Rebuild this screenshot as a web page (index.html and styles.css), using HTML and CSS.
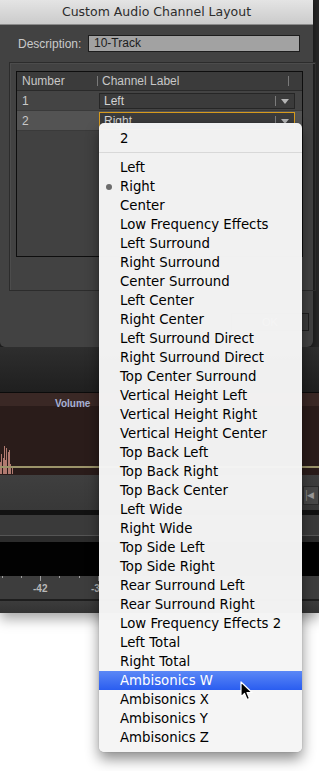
FILE: index.html
```html
<!DOCTYPE html>
<html lang="en">
  <head>
    <meta charset="UTF-8" />
    <meta name="viewport" content="width=device-width, initial-scale=1.0" />
    <title>Custom Audio Channel Layout</title>
    <link rel="stylesheet" href="styles.css">
  </head>

  <body>
    <div class="screen">
      <div class="workspace">
        <div class="dialog">
          <div class="titlebar">Custom Audio Channel Layout</div>

          <div class="desc-row">
            <label for="desc">Description:</label>
            <div class="desc-input" id="desc">10-Track</div>
          </div>

          <div class="group">
            <div class="table">
              <div class="thead">
                <div class="col-num">Number</div>
                <div class="col-label">Channel Label</div>
              </div>
              <div class="row">
                <div class="col-num">1</div>
                <div class="select">
                  <span>Left</span>
                  <span class="arrow"></span>
                </div>
              </div>
              <div class="row row-active">
                <div class="col-num">2</div>
                <div class="select select-focus">
                  <span>Right</span>
                  <span class="arrow"></span>
                </div>
              </div>
            </div>
          </div>

          <div class="btn-row">
            <div class="btn">OK</div>
          </div>
        </div>

        <div class="gap-band"></div>

        <div class="volume-panel">
          <div class="volume-head"><span class="volume-label">Volume</span></div>
          <div class="wave">
            <div class="bars">
              <span style="height: 12px"></span>
              <span style="height: 20px"></span>
              <span style="height: 16px"></span>
              <span style="height: 28px"></span>
              <span style="height: 14px"></span>
              <span style="height: 26px"></span>
              <span style="height: 22px"></span>
              <span style="height: 24px"></span>
              <span style="height: 10px"></span>
              <span style="height: 6px"></span>
            </div>
            <div class="level-line"></div>
          </div>
        </div>

        <div class="transport">
          <div class="transport-btn">&#9474;&#9664;</div>
        </div>
        <div class="black-line"></div>
        <div class="band"></div>
        <div class="band-dark"></div>
        <div class="meter"></div>
        <div class="ruler">
          <span class="tick" style="left: 2px"></span>
          <span class="tick" style="left: 21px"></span>
          <span class="tick tall" style="left: 40px"></span>
          <span class="tick" style="left: 59px"></span>
          <span class="tick" style="left: 79px"></span>
          <span class="tick tall" style="left: 98px"></span>
          <span class="ruler-num" style="left: 33px">-42</span>
          <span class="ruler-num" style="left: 91px">-3</span>
        </div>
        <div class="footer-band"></div>
      </div>

      <div class="menu">
        <div class="menu-item">2</div>
        <div class="menu-sep"></div>
        <div class="menu-item">Left</div>
        <div class="menu-item checked">Right</div>
        <div class="menu-item">Center</div>
        <div class="menu-item">Low Frequency Effects</div>
        <div class="menu-item">Left Surround</div>
        <div class="menu-item">Right Surround</div>
        <div class="menu-item">Center Surround</div>
        <div class="menu-item">Left Center</div>
        <div class="menu-item">Right Center</div>
        <div class="menu-item">Left Surround Direct</div>
        <div class="menu-item">Right Surround Direct</div>
        <div class="menu-item">Top Center Surround</div>
        <div class="menu-item">Vertical Height Left</div>
        <div class="menu-item">Vertical Height Right</div>
        <div class="menu-item">Vertical Height Center</div>
        <div class="menu-item">Top Back Left</div>
        <div class="menu-item">Top Back Right</div>
        <div class="menu-item">Top Back Center</div>
        <div class="menu-item">Left Wide</div>
        <div class="menu-item">Right Wide</div>
        <div class="menu-item">Top Side Left</div>
        <div class="menu-item">Top Side Right</div>
        <div class="menu-item">Rear Surround Left</div>
        <div class="menu-item">Rear Surround Right</div>
        <div class="menu-item">Low Frequency Effects 2</div>
        <div class="menu-item">Left Total</div>
        <div class="menu-item">Right Total</div>
        <div class="menu-item highlighted">Ambisonics W</div>
        <div class="menu-item">Ambisonics X</div>
        <div class="menu-item">Ambisonics Y</div>
        <div class="menu-item">Ambisonics Z</div>
      </div>

      <svg class="cursor" width="13" height="20" viewBox="0 0 13 20">
        <path d="M1 1 L1 16 L4.5 12.5 L7 18.5 L9.5 17.5 L7 11.5 L12 11.5 Z" fill="#000" stroke="#fff" stroke-width="1.2" stroke-linejoin="round" />
      </svg>
    </div>
  </body>
</html>
```

FILE: styles.css
```css
body {
  margin: 0;
  background-color: #ffffff;
  font-family: "Liberation Sans", Arial, sans-serif;
}

.screen {
  position: relative;
  width: 319px;
  height: 771px;
  overflow: hidden;
  background-color: #ffffff;
}

.workspace {
  background-color: #262626;
  box-shadow: 0 6px 12px rgba(0, 0, 0, 0.35);
}

/* dialog */

.dialog {
  width: 313px;
  height: 347px;
  background-color: #424242;
  border-bottom-right-radius: 6px;
  border-bottom-left-radius: 5px;
  box-shadow: 0 2px 6px rgba(0, 0, 0, 0.5);
  display: flex;
  flex-direction: column;
}

.titlebar {
  height: 24px;
  line-height: 24px;
  text-align: center;
  font-family: "DejaVu Sans", sans-serif;
  font-size: 12.5px;
  color: #2c2c2c;
  background: linear-gradient(#e4e4e4, #cbcbcb);
  border-bottom: 1px solid #8a8a8a;
}

.desc-row {
  display: flex;
  align-items: center;
  margin-top: 10px;
  padding-left: 18px;
}

.desc-row label {
  font-size: 12px;
  color: #cacaca;
  width: 70px;
}

.desc-input {
  width: 205px;
  height: 15px;
  line-height: 15px;
  padding-left: 5px;
  font-size: 12px;
  color: #1c1c1c;
  background-color: #a2a2a2;
  border: 1px solid #1d1d1d;
}

.group {
  margin: 10px 0 0 9px;
  width: 299px;
  height: 219px;
  border: 1px solid #2c2c2c;
  box-shadow: inset 1px 1px 0 #4c4c4c;
  padding: 8px 0 0 6px;
}

.table {
  width: 285px;
  height: 184px;
  border: 1px solid #0e0e0e;
  background-color: #414141;
}

.thead {
  display: flex;
  height: 18px;
  line-height: 18px;
  font-size: 12px;
  color: #c8c8c8;
  background-color: #3b3b3b;
  border-bottom: 1px solid #2a2a2a;
}

.col-num {
  width: 75px;
  padding-left: 5px;
  font-size: 12px;
  color: #c8c8c8;
}

.col-label {
  width: 186px;
  padding-left: 4px;
  border-left: 1px solid #7a7a7a;
  border-right: 1px solid #7a7a7a;
  margin: 4px 0;
  line-height: 11px;
}

.row {
  display: flex;
  align-items: center;
  height: 19px;
  background-color: #444444;
  border-bottom: 1px solid #3a3a3a;
}

.row-active {
  background-color: #535353;
}

.select {
  width: 190px;
  height: 14px;
  margin-left: 2px;
  display: flex;
  align-items: center;
  justify-content: space-between;
  padding-left: 4px;
  font-size: 12px;
  color: #d2d2d2;
  background-color: #3b3b3b;
  border: 1px solid #262626;
}

.select-focus {
  height: 16px;
  border-color: #d69a1c;
}

.arrow {
  width: 18px;
  height: 10px;
  border-left: 1px solid #7c7c7c;
  position: relative;
}

.arrow::after {
  content: "";
  position: absolute;
  left: 5px;
  top: 3px;
  border-left: 4px solid transparent;
  border-right: 4px solid transparent;
  border-top: 5px solid #b4b4b4;
}

.btn-row {
  display: flex;
  justify-content: flex-end;
  padding: 22px 4px 0 0;
}

.btn {
  width: 76px;
  height: 16px;
  border: 1px solid #1f1f1f;
  background-color: #3c3c3c;
  color: #c4c4c4;
  font-size: 11px;
  text-align: center;
  line-height: 16px;
}

/* panels behind the dialog */

.gap-band {
  height: 45px;
  background: linear-gradient(#2e2e2e, #1f1f1f);
  border-bottom: 1px solid #0b0b0b;
}

.volume-panel {
  height: 82px;
  background-color: #2a1c1a;
}

.volume-head {
  height: 13px;
  background-color: #3a2825;
  padding-left: 55px;
}

.volume-label {
  font-size: 10px;
  font-weight: bold;
  color: #a6b1d6;
  line-height: 19px;
}

.wave {
  position: relative;
  height: 69px;
}

.bars {
  display: flex;
  align-items: flex-end;
  height: 68px;
}

.bars span {
  width: 1px;
  margin-right: 0.3px;
  background-color: #b07a70;
}

.level-line {
  position: absolute;
  left: 0;
  right: 0;
  top: 60px;
  height: 2px;
  background-color: #9c946a;
}

.transport {
  height: 35px;
  background: linear-gradient(#3f3f3f, #383838);
  display: flex;
  justify-content: flex-end;
  align-items: center;
}

.transport-btn {
  width: 14px;
  height: 17px;
  margin-top: 5px;
  font-size: 9px;
  line-height: 17px;
  color: #9a9a9a;
  background-color: #484848;
  border: 1px solid #2a2a2a;
  letter-spacing: -3px;
}

.black-line {
  height: 5px;
  background-color: #121212;
}

.band {
  height: 20px;
  background-color: #3a3a3a;
  border-bottom: 1px solid #555555;
}

.band-dark {
  height: 6px;
  background-color: #2c2c2c;
}

.meter {
  height: 34px;
  background-color: #020202;
}

.ruler {
  position: relative;
  height: 23px;
  background-color: #3d3d3d;
  border-bottom: 2px solid #1e1e1e;
}

.tick {
  position: absolute;
  top: 0;
  width: 1px;
  height: 2px;
  background-color: #a0a0a0;
}

.tick.tall {
  height: 5px;
}

.ruler-num {
  position: absolute;
  top: 7px;
  font-size: 10px;
  font-weight: bold;
  color: #b8b8b8;
}

.footer-band {
  height: 12px;
  background: linear-gradient(#3c3c3c, #333333);
}

/* popup menu */

.menu {
  position: absolute;
  left: 99px;
  top: 123px;
  width: 203px;
  height: 619px;
  padding: 6px 0 4px;
  background-color: rgba(245, 245, 245, 0.98);
  border-radius: 5px;
  box-shadow: 0 7px 14px rgba(0, 0, 0, 0.45), 0 0 1px rgba(0, 0, 0, 0.4);
  font-family: "DejaVu Sans", sans-serif;
  font-size: 13.3px;
  color: #000000;
}

.menu-item {
  position: relative;
  height: 19px;
  line-height: 19px;
  padding-left: 21px;
  white-space: nowrap;
}

.menu-sep {
  height: 10px;
  position: relative;
}

.menu-sep::after {
  content: "";
  position: absolute;
  left: 0;
  right: 0;
  top: 4px;
  height: 1px;
  background-color: #d8d8d8;
}

.checked::before {
  content: "";
  position: absolute;
  left: 7px;
  top: 7px;
  width: 6px;
  height: 6px;
  border-radius: 50%;
  background-color: #6c6c6c;
}

.highlighted {
  color: #ffffff;
  background: linear-gradient(#5b88f6, #2a5df0);
}

.cursor {
  position: absolute;
  left: 240px;
  top: 681px;
}
```
